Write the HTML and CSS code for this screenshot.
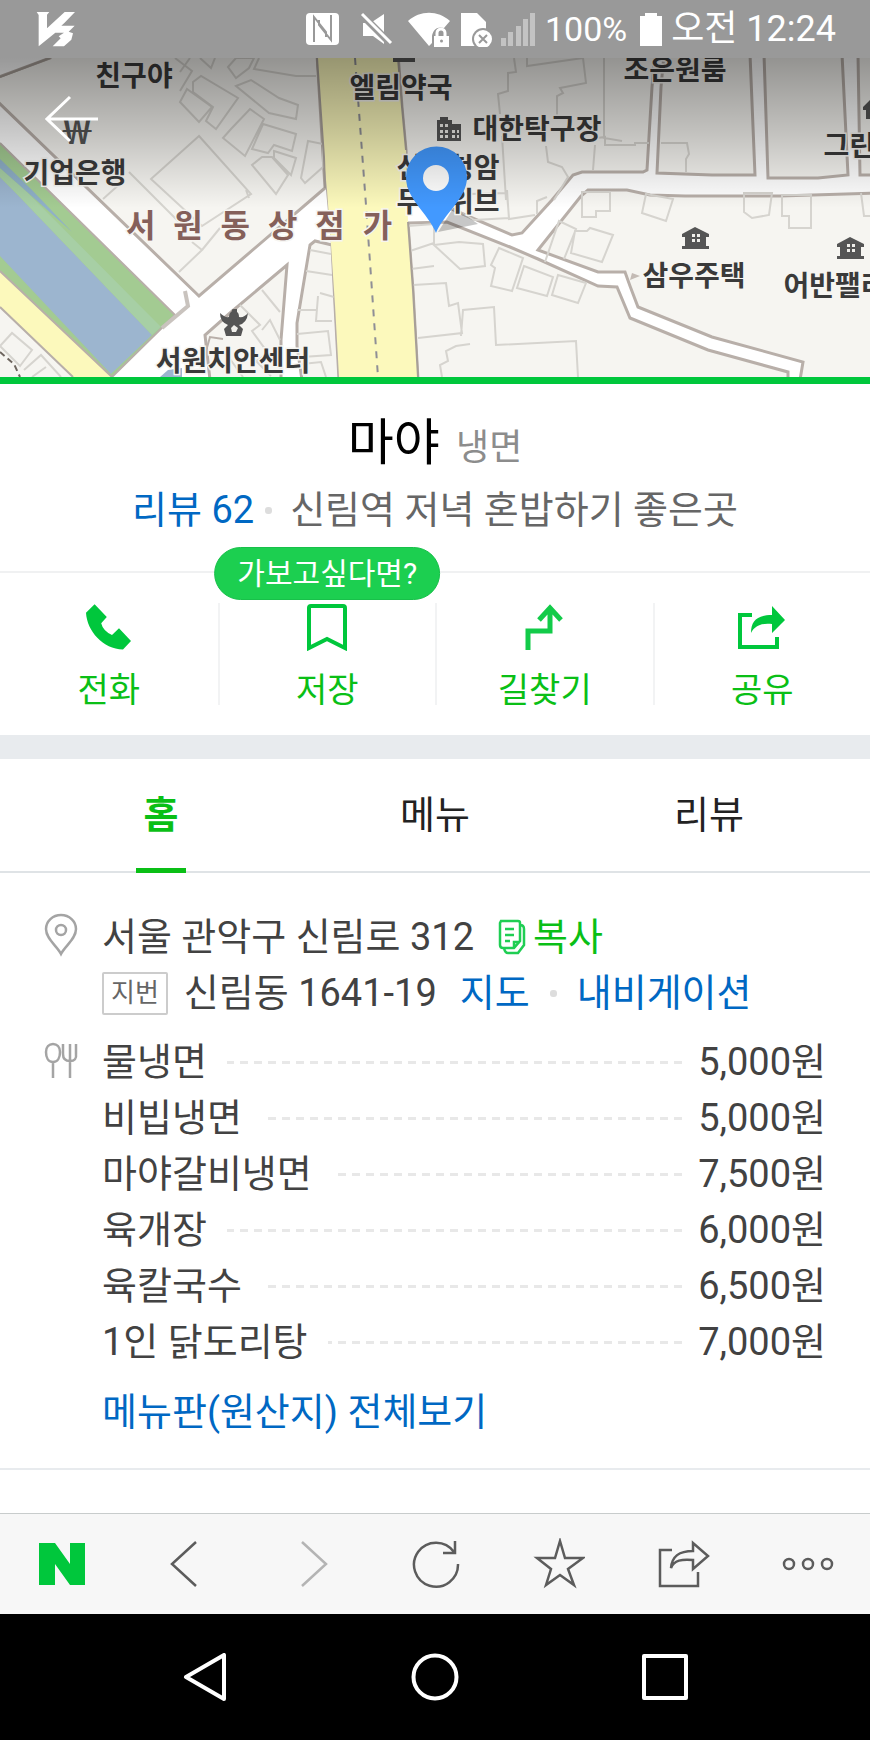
FILE: index.html
```html
<!DOCTYPE html>
<html lang="ko">
<head>
<meta charset="utf-8">
<meta name="viewport" content="width=device-width, initial-scale=1">
<title>마야 - 냉면</title>
<link rel="stylesheet" href="styles.css">
</head>
<body>
<div class="screen">
  <header class="status">
    <svg class="status-logo" width="40" height="36" viewBox="108 34 120 108" aria-label="V3"><path fill="#fff" d="M110 37H148L141 45V86L194 37H225L193 70L184 78H224L206 96L219 101L214 120L192 140H158L182 116L176 110L192 99H166L116 140V46Z"/></svg>
    <div class="status-items">
      <svg width="40" height="36" viewBox="0 0 40 36"><rect x="1" y="2" width="33" height="32" rx="4" fill="#fff"/><path d="M9 31V6l12 15V26M26 4v25L14 14V9" fill="none" stroke="#999" stroke-width="2"/></svg>
      <svg width="47" height="36" viewBox="0 0 47 36"><path fill="#fff" d="M10 12h3l18 18v3L20 25H10zM19 11l12-8v21z"/><path d="M9 4l28 28" stroke="#999" stroke-width="7"/><path d="M9 3l29 29" stroke="#fff" stroke-width="3"/></svg>
      <svg width="45" height="36" viewBox="0 0 45 36"><path fill="#fff" d="M0 10C12-1 30-1 42 10L36 17C30 15 25 18 24 25V32L21 35z"/><path fill="#fff" d="M26 25h15v11H26z"/><path d="M29 26v-4a4 4 0 0 1 8 0v4" fill="none" stroke="#fff" stroke-width="3"/><circle cx="33.500" cy="30" r="1.500" fill="#999"/></svg>
      <svg width="32" height="36" viewBox="0 0 32 36"><path fill="#fff" d="M0 2h16l9 9v24H0z"/><circle cx="22" cy="28" r="11" fill="#999"/><circle cx="22" cy="28" r="9" fill="#fff"/><path d="M18 24l8 8m0-8l-8 8" stroke="#999" stroke-width="2"/></svg>
      <svg width="36" height="36" viewBox="0 0 36 36"><path fill="#c3c3c3" d="M0 27h5v8H0zM7 21h5v14H7zM15 15h5v20h-5zM22 8h5v27h-5zM29 2h5v33h-5z"/></svg>
      <span>100%</span>
      <svg width="28" height="36" viewBox="0 0 28 36"><path fill="#fff" d="M10 2h12v3h5v30H5V5h5z"/></svg>
      <time>오전 12:24</time>
    </div>
  </header>

  <div class="map">
    <svg class="map-art" viewBox="0 58 870 319" preserveAspectRatio="xMidYMin slice" role="img" aria-label="지도">
      <defs>
        <linearGradient id="shade" x1="0" y1="0" x2="0" y2="1"><stop offset="0" stop-opacity=".4"/><stop offset=".5" stop-opacity=".21"/><stop offset="1" stop-opacity="0"/></linearGradient>
      </defs>
      <rect y="58" width="870" height="319" fill="#fff"/>
      <path fill="#a3cb92" d="M0 143L175 315L112 377L0 271z"/>
      <path fill="#9cb5cf" d="M0 177L13 190L152 335L111 374L0 256z"/>
      <path fill="#a7cfa5" d="M0 168L25 190L161 327L152 335L13 190L0 177z"/>
      <path fill="#8fb0c8" d="M0 159L32 190L72 232L26 191L0 168z"/>
      <path fill="#fcf9bc" d="M0 271L112 377H73L0 307z"/>
      <path fill="#f6f5f1" d="M0 307L73 377H0z"/>
      <path fill="#9cb5cf" d="M160 377l8-7 14-2v9z"/>
      <g class="block">
        <path d="M-4 78L50 58V54H317L325 188L199 296L-4 100z"/>
        <path d="M287 265L281 340V380H210L205 335L230 313z"/>
        <path d="M310 245L315 241L332 245L335 305L339 380H302L297 346V323z"/>
        <path d="M398 54H655L652 87L647 170L643 172H582L573 175L552 200L522 233L512 235L470 217L408 190L406 150L402 107z"/>
        <path d="M664 54L661 87L657 173L712 175H755L750 54z"/>
        <path d="M764 54L768 178H818L848 175L842 54z"/>
        <path d="M858 54L860 175H874V54z"/>
        <path d="M538 250L581 196L588 190H627L650 195L685 196H780L874 193V380H800L803 362L712 337L638 307L630 286L625 272H598z"/>
        <path d="M408 223L447 222L510 247L538 259L598 286L617 287L630 318L708 350L788 372V380H418L413 290z"/>
      </g>
      <g class="lot">
        <path d="M180 72l10-14M175 58l17 13-12 20M200 58l11 10 4-10M228 67l8-9h18l-5 10-13 10zM259 58l-5 11 42 7h20M236 86l15-6 28 18 19 7-2 14-27-6zM193 82l8-6 37 22-22 31-10-8 7-14-20-15zM187 89l25 18-13 15-19-20zM250 109l14 10-19 37-22-18 8-9zM263 124l33 10-4 17-18-6-6 8-16-4zM262 157h10l16 18-12 19-24-29zM274 151l22 7-5 17-17-17zM308 141l15 3v23l-18 16-4-5zM199 136l-48 43 51 47 49-32zM129 172l34 34M147 190l33 33M103 199l19-17M246 190l3 8M179 272l23-22-10-8M202 250l18-22"/>
        <path d="M0 346l12-13 20 17-12 16zM24 370l17-15 20 22M32 377l14-10M262 290l18 22M240 305l20 20-8 6 16 22-14 10M262 330l8-10 10 20M245 350l26 26M225 352l18 25M310 250l21 4M306 271l26 4M320 293l14 4M318 296l-2 25h16M297 310h20M297 334l31-3 3 24-29 2M302 364l19-2 5 15"/>
        <path d="M514 58l2 14-8 1v18l-10 3 2 20M502 136l4 64M527 58v8l56-8 3 25-26 5 3 5-6 3v19M604 58v80l18 3M546 146l2 16 14 5 6 10-14 23M595 145l-2 25M597 138l8-1v8h30v-2h14M661 143h26l2 11-3 5v13M427 195l80-2 2 25-35 2zM507 190l2 29 26-4M537 214v-13l10-4"/>
        <path d="M582 192h28v19h-14v6h-14zM646 194l27 5-7 22-24-8zM744 193h28l-3 22-17 3-8-6zM782 195h29v33h-22v-12h-7zM861 193l3 23h6M545 262l14-41 17 8-12 30M575 231h12l3-3 23 7-11 27-31-9zM408 226l26-2v19l-24 8M434 245l25-3 24 2 2 22-25 3zM499 248l24 10-11 33-21-5 4-18-4-3zM524 266l29 11-6 19-30-8zM558 275l28 8-8 20-26-8zM411 269l23-3M413 285l33-2 3 23 9-3 4 30-44 5M461 336l2-26 31-3 2 38 80-4 2 36M442 377l-2-12 8-4-2-10 10-5 14-2"/>
      </g>
      <path d="M0 143L175 315L112 377M0 271L112 377M0 307L73 377M317 58L325 160L327 190L332 245L335 305L339 377M200 372l10-35 13 2" fill="none" stroke="#b8afa9" stroke-width="2"/>
      <path d="M185 291l3 15-26 22" fill="none" stroke="#c9c3be" stroke-width="4"/>
      <path d="M0 352l14 12 6 13" fill="none" stroke="#6d655e" stroke-width="2" stroke-dasharray="6 4"/>
      <path fill="#fcf9bc" d="M317 58H398L402 107L406 150L408 222L413 290L418 377H339L335 305L331 245L327 190L324 160z"/>
      <path d="M317 58L324 157L325 188M398 58L402 107L406 150M408 222L413 290L418 377M0 77L50 58" fill="none" stroke="#a79f98" stroke-width="2"/>
      <path d="M355 58L366 205L378 377" fill="none" stroke="#8f8f96" stroke-width="2" stroke-dasharray="7 7"/>
      <path d="M630 280l10-4-8-3z" fill="#c4bbb5"/>
      <path d="M438 232L454 207L478 224z" fill="#000" opacity=".22"/>

      <g fill="#555">
        <path d="M393 58h22v4h-22z"/>
        <path d="M437 120h3v-3h8v3h4v4h9v17h-24z"/>
        <path d="M682 234L695 227L709 234V237H706V246H709V249H682V246H685V237H682z"/>
        <path d="M837 244L850 237L864 244V247H861V256H864V259H837V256H840V247H837z"/>
        <path d="M863 107l7-7v19h-4v-9h-3z"/>
        <path d="M220 313q5 5 9 4 0-4 3-6-1-2 2-2h3v3q2 1 2 5 5 1 9-4-1 10-9 12l4 4-2 7h-15l-2-7 4-4q-8-3-8-12z"/>
      </g>
      <path fill="#f0efeb" d="M440 124h3v3h-3zM445 124h3v3h-3zM440 130h3v3h-3zM445 130h3v3h-3zM440 135h3v3h-3zM445 135h3v3h-3zM452 130h3v3h-3zM457 130h2v3h-2zM452 135h3v3h-3zM457 135h2v3h-2zM692 234h3v3h-3zM697 234h3v3h-3zM692 239h3v3h-3zM697 239h3v3h-3zM847 244h3v3h-3zM852 244h3v3h-3zM847 249h3v3h-3zM852 249h3v3h-3zM231 328l3-3 4 3-2 4h-4z"/>

      <g class="place">
        <text x="134" y="86">친구야</text>
        <text x="401" y="98">엘림약국</text>
        <text x="537" y="139">대한탁구장</text>
        <text x="675" y="80">조은원룸</text>
        <text x="875" y="156">그린빌라</text>
        <text x="77" y="144" class="won">￦</text>
        <text x="75" y="183">기업은행</text>
        <text x="448" y="178">신림청암</text>
        <text x="448" y="212">두산위브</text>
        <text x="694" y="286">삼우주택</text>
        <text x="848" y="296">어반팰리스</text>
        <text x="233" y="371">서원치안센터</text>
        <text x="259" y="237" class="district">서  원  동  상  점  가</text>
      </g>
      <path fill="#4299ff" d="M436 233C428 213 406 199 406 177A30.500 30.500 0 0 1 467 177C467 199 444 213 436 233z"/>
      <circle cx="436" cy="178" r="13" fill="#fff"/>
      <rect y="58" width="870" height="150" fill="url(#shade)"/>
    </svg>
    <a class="back" href="#" aria-label="뒤로"><svg width="54" height="48" viewBox="0 0 54 48"><path d="M25 2L2 24L25 46M2 24H53" fill="none" stroke="#fff" stroke-width="3"/></svg></a>
  </div>

  <main>
    <section class="place-head">
      <h1>마야 <small>냉면</small></h1>
      <p><a href="#">리뷰 62</a><i class="dot"></i><span>신림역 저녁 혼밥하기 좋은곳</span></p>
    </section>

    <nav class="actions">
      <a href="#"><svg width="48" height="48" viewBox="0 0 48 48"><path fill="#00c73c" d="M9.600 1.300L21.800 14L16.200 20.300Q18 28 27 32L34 25.300L46 38L38 46.500C18 46 2 28 1 9.700z"/></svg>전화</a>
      <a href="#"><svg width="48" height="48" viewBox="0 0 48 48"><path d="M6 45V5q0-2 2-2H40q2 0 2 2V45L24 36z" fill="none" stroke="#00c73c" stroke-width="4"/></svg>저장<span class="bubble">가보고싶다면?</span></a>
      <a href="#"><svg width="48" height="48" viewBox="0 0 48 48"><path d="M7 47V28H29V6M18 17L29 5L40 17" fill="none" stroke="#12cb49" stroke-width="5"/></svg>길찾기</a>
      <a href="#"><svg width="48" height="48" viewBox="0 0 48 48"><path d="M14 12H2V44H39V34" fill="none" stroke="#00c73c" stroke-width="4"/><path fill="#00c73c" d="M13 30C13 18 19 12 34 12V3L47 17L34 30V21C24 20 17 22 13 30z"/></svg>공유</a>
    </nav>

    <nav class="tabs">
      <a class="on" href="#">홈</a>
      <a href="#">메뉴</a>
      <a href="#">리뷰</a>
    </nav>

    <section class="info">
      <div class="info-row">
        <svg class="info-icon" width="34" height="44" viewBox="0 0 34 44"><g fill="none" stroke="#a4a4a4" stroke-width="2.500"><path d="M17 41C13 33 2 26 2 16A15 14 0 0 1 32 16C32 26 21 33 17 41z"/><circle cx="17" cy="17" r="5"/></g></svg>
        <div class="info-body">
          <div class="line">
            <span>서울 관악구 신림로 312</span>
            <button class="copy" type="button"><svg width="28" height="36" viewBox="0 0 28 36"><path d="M3 2H20q2 0 2 2V22L16 29H5Q2 29 2 26V4zM22 6q4 0 4 4V26l-6 8H10q-3 0-4-5M16 29V23H22M7 10h9M7 16h9M7 22h5" fill="none" stroke="#1fce53" stroke-width="2.500"/></svg>복사</button>
          </div>
          <div class="line">
            <span class="tag">지번</span><span class="lot-address">신림동 1641-19</span>
            <a href="#">지도</a><i class="dot dot-wide"></i><a href="#">내비게이션</a>
          </div>
        </div>
      </div>
      <div class="info-row">
        <svg class="info-icon" width="34" height="44" viewBox="0 0 34 44"><path d="M9 24V40M9 24C4 24 2 19 2 14S5 6 9 6S16 9 16 14S14 24 9 24zM26 6V40M19 6V16Q19 23 26 23T32 16V6" fill="none" stroke="#a4a4a4" stroke-width="2.500"/></svg>
        <div class="info-body">
          <ul class="menu">
            <li><span>물냉면</span><b>5,000원</b></li>
            <li><span>비빕냉면</span><b>5,000원</b></li>
            <li><span>마야갈비냉면</span><b>7,500원</b></li>
            <li><span>육개장</span><b>6,000원</b></li>
            <li><span>육칼국수</span><b>6,500원</b></li>
            <li><span>1인 닭도리탕</span><b>7,000원</b></li>
          </ul>
          <a class="all" href="#">메뉴판(원산지) 전체보기</a>
        </div>
      </div>
    </section>
  </main>

  <nav class="toolbar">
    <a href="#" aria-label="네이버 홈"><svg width="52" height="52" viewBox="0 0 52 52"><path fill="#00c73c" d="M3 5H19L34 26V5H49V47H34L19 26V47H3z"/></svg></a>
    <button type="button" aria-label="이전"><svg width="52" height="52" viewBox="0 0 52 52" stroke-width="2.500"><path d="M36 4L12 26L36 48"/></svg></button>
    <button type="button" aria-label="다음"><svg width="52" height="52" viewBox="0 0 52 52" stroke-width="2.500"><path class="off" d="M17 4L41 26L17 48"/></svg></button>
    <button type="button" aria-label="새로고침"><svg width="52" height="52" viewBox="0 0 52 52" stroke-width="2.500"><path d="M45 14A22 22 0 1 0 49 26M46 3V15H34"/></svg></button>
    <button type="button" aria-label="즐겨찾기"><svg width="52" height="52" viewBox="0 0 52 52" stroke-width="2.500"><path d="M27 3L32 20H50L35 31L41 47L27 37L13 47L18 31L4 20H22z"/></svg></button>
    <button type="button" aria-label="공유"><svg width="52" height="52" viewBox="0 0 52 52" stroke-width="2.500"><path d="M14 12H2V48H40V34M13 30C14 18 21 13 35 13V5L50 18L35 31V22C24 21 16 22 13 30z"/></svg></button>
    <button type="button" aria-label="더보기"><svg width="52" height="52" viewBox="0 0 52 52" stroke-width="2.500"><circle cx="7" cy="26" r="5"/><circle cx="26" cy="26" r="5"/><circle cx="45" cy="26" r="5"/></svg></button>
  </nav>

  <nav class="system">
    <button type="button" aria-label="뒤로"><svg width="48" height="48" viewBox="0 0 48 48"><path d="M5 24L43 2V46z"/></svg></button>
    <button type="button" aria-label="홈"><svg width="48" height="48" viewBox="0 0 48 48"><circle cx="24" cy="24" r="21.500"/></svg></button>
    <button type="button" aria-label="최근 앱"><svg width="48" height="48" viewBox="0 0 48 48"><path d="M3 3H45V45H3z"/></svg></button>
  </nav>
</div>
</body>
</html>
```
FILE: styles.css
```css
* { box-sizing: border-box; }

body {
  margin: 0;
  font-family: Roboto, "Noto Sans CJK KR", sans-serif;
  font-size: 38px;
  line-height: 56px;
  color: #424242;
  background: #fff;
}

a { color: #0068c3; text-decoration: none; }

button {
  padding: 0;
  border: 0;
  background: none;
  font: inherit;
  color: inherit;
}

svg { display: block; flex: none; }

.screen {
  display: flex;
  flex-direction: column;
  min-height: 100vh;
}

/* Status bar */
.status {
  display: flex;
  justify-content: space-between;
  align-items: center;
  height: 58px;
  padding: 0 34px 0 36px;
  background: #999;
  color: #fff;
  font-size: 34px;
}

.status time { font-size: 36px; }

.status-items {
  display: flex;
  align-items: center;
  gap: 8px;
  white-space: nowrap;
}

/* Map */
.map {
  position: relative;
  border-bottom: 7px solid #00c73c;
}

.map-art { width: 100%; height: 319px; }

.block { fill: #f6f5f1; stroke: #b8afa9; stroke-width: 3; }
.lot { fill: none; stroke: #d6d4cf; stroke-width: 2; }

.place {
  font-family: "Noto Sans CJK KR", sans-serif;
  font-size: 28px;
  font-weight: 700;
  text-anchor: middle;
  fill: #3a3a3a;
  stroke: #f6f5f1;
  stroke-width: 3px;
  paint-order: stroke;
}

.won { font-size: 34px; fill: #555; stroke: none; }

.district {
  font-size: 32px;
  fill: #85605a;
  white-space: pre;
}

.back {
  position: absolute;
  top: 37px;
  left: 45px;
}

/* Title */
.place-head {
  padding: 25px 24px 33px;
  text-align: center;
}

.place-head h1 {
  margin: 0;
  font-size: 50px;
  font-weight: 400;
  line-height: 68px;
  color: #000;
}

.place-head small {
  margin-left: 4px;
  font-size: 36px;
  line-height: 36px;
  color: #8c8c8c;
}

.place-head p {
  display: flex;
  justify-content: center;
  align-items: center;
  margin: 5px 0 0;
  color: #666;
}

.dot {
  width: 7px;
  height: 7px;
  margin: 0 18px 0 11px;
  border-radius: 3px;
  background: #ddd;
}

.dot-wide { margin: 0 20px; }

/* Action buttons */
.actions {
  display: grid;
  grid-template-columns: repeat(4, 1fr);
  padding: 30px 0;
  border-top: 2px solid #f0f1f2;
}

.actions a {
  position: relative;
  display: flex;
  flex-direction: column;
  align-items: center;
  gap: 11px;
  height: 102px;
  color: #0abf16;
  font-size: 34px;
}

.actions a + a { border-left: 2px solid #f2f3f4; }

.bubble {
  position: absolute;
  top: -56px;
  left: 50%;
  translate: -50%;
  padding: 0 22px;
  border: 1px solid #18c04a;
  border-radius: 27px;
  background: #1ccf50;
  color: #fff;
  font-size: 30px;
  line-height: 51px;
  white-space: nowrap;
}

/* Tabs */
.tabs {
  display: grid;
  grid-template-columns: repeat(3, 1fr);
  padding: 0 24px;
  border-top: 24px solid #e8ebee;
  border-bottom: 2px solid #dfe3e6;
  text-align: center;
}

.tabs a {
  position: relative;
  color: #222;
  line-height: 112px;
}

.tabs .on { color: #0abf16; font-weight: 700; }

.tabs .on::after {
  content: "";
  position: absolute;
  bottom: -2px;
  left: 50%;
  width: 50px;
  height: 5px;
  translate: -50%;
  background: #0abf16;
}

/* Shop details */
.info {
  display: grid;
  gap: 13px;
  padding: 36px 44px 28px;
  border-bottom: 2px solid #e8ebee;
}

.info-row { display: flex; gap: 24px; }
.info-icon { margin-top: 4px; }
.info-body { flex: 1; }

.line {
  display: flex;
  align-items: center;
  white-space: nowrap;
}

.copy {
  display: flex;
  align-items: center;
  gap: 7px;
  margin-left: 24px;
  color: #0abf16;
}

.tag {
  padding: 0 7px;
  border: 2px solid #ccc;
  border-radius: 2px;
  color: #666;
  font-size: 26px;
  line-height: 39px;
}

.lot-address { margin: 0 23px 0 16px; }

.menu {
  margin: 0;
  padding: 0;
  list-style: none;
}

.menu li {
  display: flex;
  align-items: center;
}

.menu li::before {
  content: "";
  order: 1;
  flex: 1;
  height: 3px;
  margin: 0 16px 0 20px;
  background: repeating-linear-gradient(to left, #e8e8e8 0 8px, transparent 8px 14px);
}

.menu b { order: 2; font-weight: 400; }

.all { display: block; margin-top: 14px; }

/* Browser toolbar */
.toolbar {
  display: grid;
  grid-template-columns: repeat(7, 1fr);
  place-items: center;
  height: 101px;
  margin-top: auto;
  border-top: 1px solid #c8cccc;
  background: #f7f7f7;
}

.toolbar button svg { fill: none; stroke: #5c5c5c; }
.toolbar .off { stroke: #b4b4b4; }

/* System navigation */
.system {
  display: flex;
  justify-content: center;
  align-items: center;
  gap: 182px;
  height: 126px;
  background: #000;
}

.system svg { fill: none; stroke: #fff; stroke-width: 4; stroke-linejoin: round; }
```
